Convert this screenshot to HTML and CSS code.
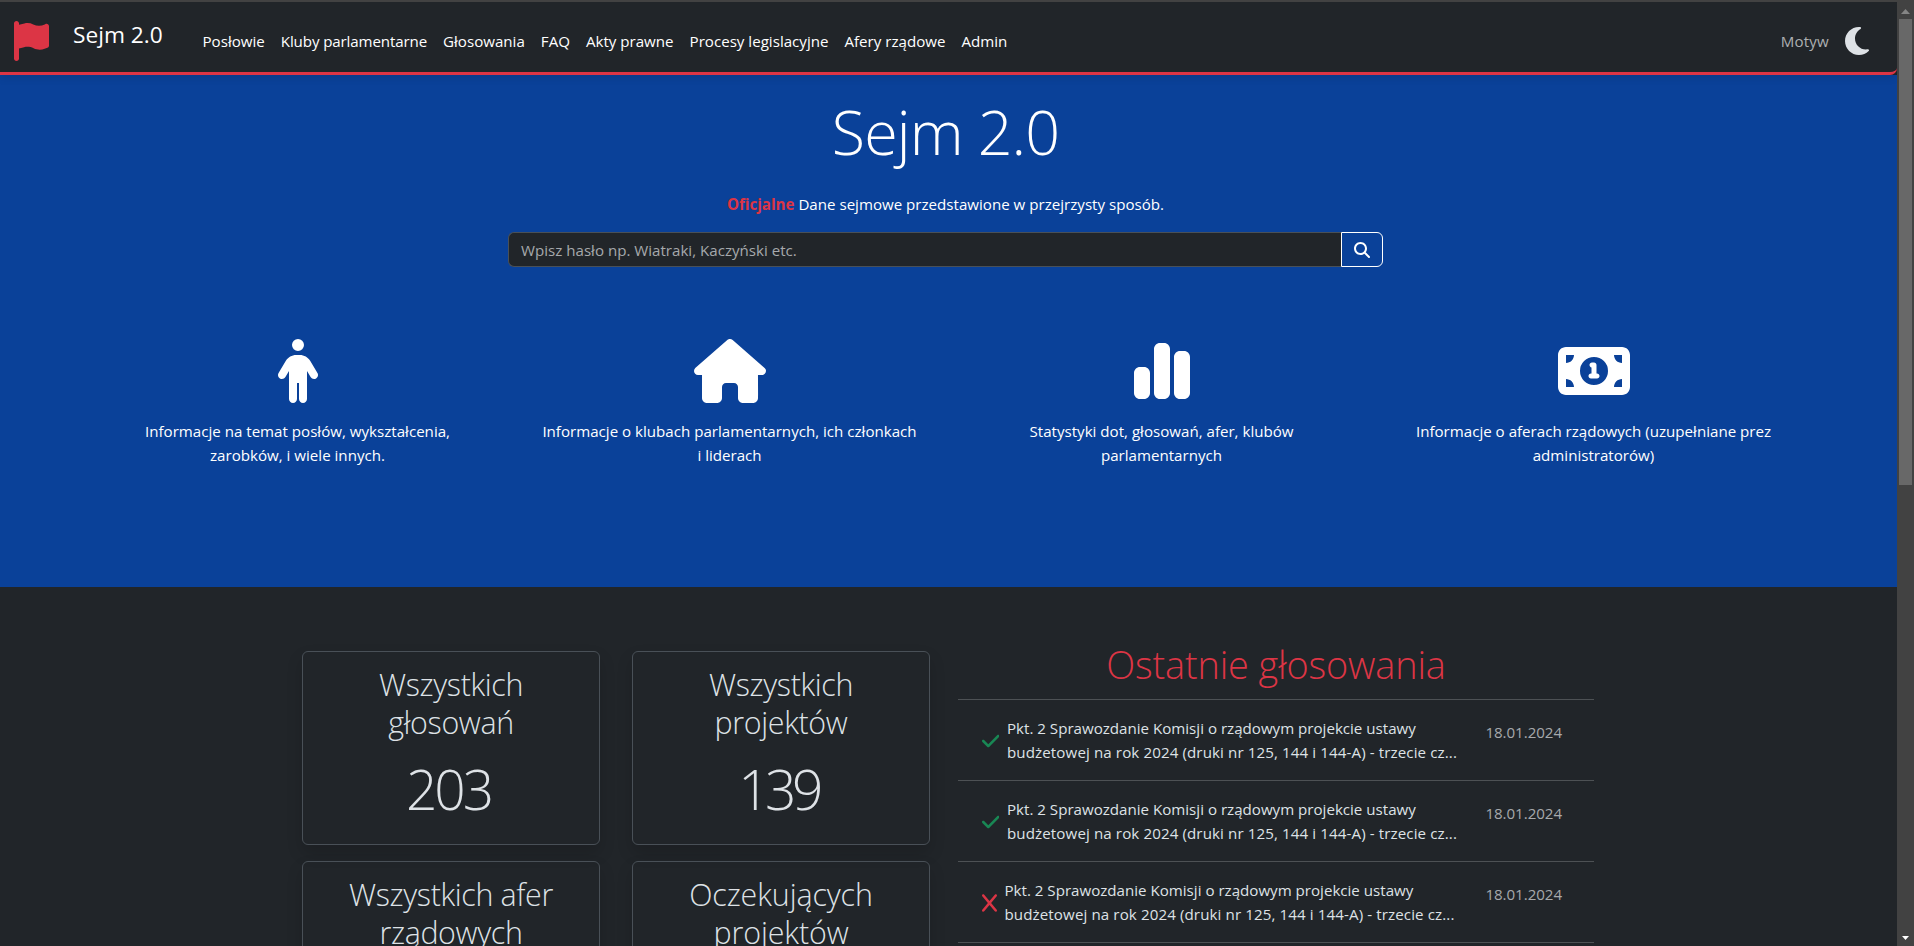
FILE: index.html
```html
<!DOCTYPE html>
<html lang="pl">
<head>
<meta charset="utf-8">
<title>Sejm 2.0</title>
<link rel="stylesheet" href="styles.css">
</head>
<body>
<div class="window">
  <div class="page">
    <div class="nav-wrap">
      <nav class="navbar">
        <svg class="flag" viewBox="0 0 448 512"><path d="M64 32C64 14.3 49.7 0 32 0S0 14.3 0 32V64 368 480c0 17.7 14.3 32 32 32s32-14.3 32-32V352l64.3-16.1c41.1-10.3 84.6-5.5 122.5 13.4c44.2 22.1 95.5 24.8 141.7 7.4l34.7-13c12.5-4.7 20.8-16.6 20.8-30V66.1c0-23-24.2-38-44.8-27.7l-9.6 4.8c-46.3 23.2-100.8 23.2-147.1 0c-35.1-17.6-75.4-22-113.5-12.5L64 48V32z"/></svg>
        <a class="brand">Sejm 2.0</a>
        <ul class="links">
          <li>Posłowie</li><li class="tight">Kluby parlamentarne</li><li>Głosowania</li><li>FAQ</li><li>Akty prawne</li><li>Procesy legislacyjne</li><li>Afery rządowe</li><li>Admin</li>
        </ul>
        <div class="theme">
          <span>Motyw</span>
          <svg class="moon" viewBox="0 0 384 512"><path d="M223.5 32C100 32 0 132.3 0 256S100 480 223.5 480c60.6 0 115.5-24.2 155.8-63.4c5-4.9 6.3-12.5 3.1-18.7s-10.1-9.7-17-8.5c-9.8 1.7-19.8 2.6-30.1 2.6c-96.9 0-175.5-78.8-175.5-176c0-65.8 36-123.1 89.3-153.3c6.1-3.5 9.2-10.5 7.7-17.3s-7.3-11.9-14.3-12.5c-6.3-.5-12.6-.8-19-.8z"/></svg>
        </div>
      </nav>
    </div>

    <header class="hero">
      <h1 class="hero-title">Sejm 2.0</h1>
      <p class="lead"><b>Oficjalne</b> Dane sejmowe przedstawione w przejrzysty sposób.</p>
      <div class="search">
        <div class="search-input">Wpisz hasło np. Wiatraki, Kaczyński etc.</div>
        <button class="search-btn" aria-label="Szukaj"><svg viewBox="0 0 512 512"><path d="M416 208c0 45.900-14.900 88.300-40 122.700L502.600 457.400c12.500 12.500 12.500 32.800 0 45.300s-32.800 12.500-45.300 0L330.700 376c-34.400 25.200-76.800 40-122.700 40C93.100 416 0 322.900 0 208S93.100 0 208 0S416 93.100 416 208zM208 352a144 144 0 1 0 0-288 144 144 0 1 0 0 288z"/></svg></button>
      </div>
      <div class="features">
        <div class="feature">
          <svg viewBox="0 0 320 512"><path d="M112 48a48 48 0 1 1 96 0 48 48 0 1 1-96 0zm40 304V480c0 17.700-14.300 32-32 32s-32-14.300-32-32V256.900L59.400 304.500c-9.100 15.100-28.800 20-43.900 10.900s-20-28.800-10.900-43.900l58.300-97c17.400-28.900 48.600-46.600 82.300-46.600h29.700c33.700 0 64.900 17.700 82.300 46.600l58.300 97c9.100 15.100 4.200 34.800-10.900 43.900s-34.800 4.200-43.900-10.900L232 256.900V480c0 17.700-14.300 32-32 32s-32-14.300-32-32V352H152z"/></svg>
          <p>Informacje na temat posłów, wykształcenia,<br>zarobków, i wiele innych.</p>
        </div>
        <div class="feature">
          <svg viewBox="0 0 576 512"><path d="M575.800 255.500c0 18-15 32.100-32 32.100h-32l.7 160.200c0 2.700-.2 5.400-.5 8.100V472c0 22.100-17.900 40-40 40H456c-1.100 0-2.200 0-3.300-.1c-1.400 .1-2.800 .1-4.200 .1H416 392c-22.100 0-40-17.900-40-40V448 384c0-17.700-14.300-32-32-32H256c-17.700 0-32 14.300-32 32v64 24c0 22.100-17.900 40-40 40H160 128.100c-1.500 0-3-.1-4.500-.2c-1.200 .1-2.400 .2-3.600 .2H104c-22.100 0-40-17.900-40-40V360c0-.9 0-1.900 .1-2.800V287.600H32c-18 0-32-14-32-32.100c0-9 3-17 10-24L266.400 8c7-7 15-8 22-8s15 2 21 7L564.800 231.500c8 7 12 15 11 24z"/></svg>
          <p>Informacje o klubach parlamentarnych, ich członkach<br>i liderach</p>
        </div>
        <div class="feature">
          <svg viewBox="0 0 448 512"><path d="M160 80c0-26.500 21.500-48 48-48h32c26.500 0 48 21.500 48 48V432c0 26.500-21.500 48-48 48H208c-26.500 0-48-21.500-48-48V80zM0 272c0-26.500 21.500-48 48-48H80c26.500 0 48 21.500 48 48V432c0 26.500-21.500 48-48 48H48c-26.500 0-48-21.500-48-48V272zM368 96h32c26.500 0 48 21.500 48 48V432c0 26.500-21.500 48-48 48H368c-26.500 0-48-21.500-48-48V144c0-26.500 21.500-48 48-48z"/></svg>
          <p>Statystyki dot, głosowań, afer, klubów<br>parlamentarnych</p>
        </div>
        <div class="feature">
          <svg viewBox="0 0 576 512"><path d="M64 64C28.700 64 0 92.700 0 128V384c0 35.300 28.700 64 64 64H512c35.300 0 64-28.700 64-64V128c0-35.300-28.700-64-64-64H64zm64 320H64V320c35.300 0 64 28.700 64 64zM64 192V128h64c0 35.300-28.700 64-64 64zM448 384c0-35.300 28.700-64 64-64v64H448zm64-192c-35.300 0-64-28.700-64-64h64v64zM176 256a112 112 0 1 1 224 0 112 112 0 1 1 -224 0zm76-48c0 9.700 6.900 17.700 16 19.600V276h-4c-11 0-20 9-20 20s9 20 20 20h24 24c11 0 20-9 20-20s-9-20-20-20h-4V208c0-11-9-20-20-20H272c-11 0-20 9-20 20z"/></svg>
          <p>Informacje o aferach rządowych (uzupełniane prez<br>administratorów)</p>
        </div>
      </div>
    </header>

    <main class="main">
      <section class="stats">
        <article class="card"><h2>Wszystkich<br>głosowań</h2><div class="num">203</div></article>
        <article class="card"><h2>Wszystkich<br>projektów</h2><div class="num num-tight">139</div></article>
        <article class="card"><h2>Wszystkich afer<br>rządowych</h2></article>
        <article class="card"><h2 class="wide">Oczekujących<br>projektów</h2></article>
      </section>
      <section class="votes">
        <h2 class="votes-title">Ostatnie głosowania</h2>
        <div class="vote">
          <svg class="check" viewBox="0 0 448 512"><path d="M438.600 105.400c12.500 12.500 12.500 32.800 0 45.300l-256 256c-12.500 12.500-32.800 12.500-45.300 0l-128-128c-12.500-12.500-12.500-32.800 0-45.300s32.800-12.500 45.300 0L160 338.700 393.400 105.400c12.500-12.500 32.800-12.500 45.300 0z"/></svg>
          <p>Pkt. 2 Sprawozdanie Komisji o rządowym projekcie ustawy<br><span class="snug">budżetowej na rok 2024 (druki nr 125, 144 i 144-A) - trzecie cz...</span></p>
          <time>18.01.2024</time>
        </div>
        <div class="vote">
          <svg class="check" viewBox="0 0 448 512"><path d="M438.600 105.400c12.500 12.500 12.500 32.800 0 45.300l-256 256c-12.500 12.500-32.800 12.500-45.300 0l-128-128c-12.500-12.500-12.500-32.800 0-45.300s32.800-12.500 45.300 0L160 338.700 393.400 105.400c12.500-12.500 32.800-12.500 45.300 0z"/></svg>
          <p>Pkt. 2 Sprawozdanie Komisji o rządowym projekcie ustawy<br><span class="snug">budżetowej na rok 2024 (druki nr 125, 144 i 144-A) - trzecie cz...</span></p>
          <time>18.01.2024</time>
        </div>
        <div class="vote">
          <svg class="cross" viewBox="0 0 384 512"><path d="M376.600 84.500c11.300-13.600 9.500-33.800-4.100-45.100s-33.800-9.500-45.100 4.100L192 206 56.600 43.500C45.300 29.900 25.100 28.100 11.500 39.400S-3.900 70.900 7.400 84.500L150.300 256 7.400 427.500c-11.300 13.600-9.500 33.800 4.100 45.100s33.800 9.500 45.100-4.100L192 306 327.400 468.500c11.300 13.600 31.500 15.400 45.100 4.100s15.400-31.500 4.100-45.100L233.700 256 376.600 84.500z"/></svg>
          <p>Pkt. 2 Sprawozdanie Komisji o rządowym projekcie ustawy<br><span class="snug">budżetowej na rok 2024 (druki nr 125, 144 i 144-A) - trzecie cz...</span></p>
          <time>18.01.2024</time>
        </div>
        <div class="vote"></div>
      </section>
    </main>
  </div>
  <div class="scrollbar">
    <svg class="arrow-up" viewBox="0 0 9 5"><path d="M0 5h9L4.500 0z"/></svg>
    <div class="thumb"></div>
    <svg class="arrow-down" viewBox="0 0 7 4"><path d="M0 0h7L3.500 4z"/></svg>
  </div>
</div>
</body>
</html>
```
FILE: styles.css
```css
* { box-sizing: border-box; margin: 0; padding: 0; }

body {
  height: 946px;
  overflow: hidden;
  background: #212529;
  color: #dee2e6;
  font: 15.12px/24px "Open Sans", "Noto Sans", sans-serif;
  white-space: nowrap;
}

svg { display: block; flex: none; }

.window {
  display: flex;
  height: 946px;
  border-top: 2px solid #424242;
}
.page { width: 1897px; overflow: hidden; }

/* Navigation */
.nav-wrap {
  position: relative;
  background: #212529;
}
.navbar {
  display: flex;
  height: 73px;
  padding: 0 28px 0 14px;
  border-bottom: 3px solid #dc3545;
  border-bottom-right-radius: 7px;
  box-shadow: 0 2px 10px rgba(0, 0, 0, .12);
}
.flag { width: 35px; height: 40px; margin-top: 19px; fill: #dc3545; }
.brand {
  width: 122px;
  margin: 13px 0 0 24px;
  color: #fff;
  font-size: 22.700px;
  line-height: 39px;
}
.links {
  display: flex;
  gap: 16px;
  margin: 27px 0 0 7.500px;
  list-style: none;
  color: #fff;
}
.tight { letter-spacing: -.12px; }
.theme {
  display: flex;
  gap: 16px;
  margin-left: auto;
  color: #adb0b2;
}
.theme span { margin-top: 27px; letter-spacing: .2px; }
.moon { width: 24px; height: 32px; margin-top: 23px; fill: #dee2e6; }

/* Hero */
.hero {
  display: flex;
  flex-direction: column;
  align-items: center;
  height: 512px;
  padding: 18px 6px 0 0;
  background: #0a4199;
  color: #fff;
}
.hero-title {
  font-size: 61px;
  font-weight: 300;
  line-height: 77px;
  letter-spacing: -.9px;
}
.lead { margin-top: 22px; }
.lead b { color: #dc3545; }
.search {
  display: flex;
  width: 875px;
  height: 35px;
  margin-top: 16px;
}
.search-input {
  flex: 1;
  padding: 5px 12px;
  border: 1px solid #495057;
  border-right: 0;
  border-radius: 6px 0 0 6px;
  background: #212529;
  color: #a6a9ac;
}
.search-btn {
  display: flex;
  align-items: center;
  justify-content: center;
  width: 42px;
  border: 1px solid #fff;
  border-radius: 0 6px 6px 0;
  background: transparent;
}
.search-btn svg { width: 16px; height: 16px; fill: #fff; }
.features {
  display: grid;
  grid-template-columns: repeat(4, 432px);
  margin-top: 72px;
}
.feature {
  display: flex;
  flex-direction: column;
  align-items: center;
  gap: 16px;
  text-align: center;
}
.feature svg { height: 64px; fill: #fff; }

/* Statistics and latest votes */
.main {
  display: flex;
  gap: 28px;
  padding: 54px 0 0 302px;
}
.stats {
  display: grid;
  grid-template-columns: 298px 298px;
  gap: 16px 32px;
  padding-top: 10px;
}
.card {
  height: 194px;
  padding-top: 14px;
  border: 1px solid #495057;
  border-radius: 6px;
  box-shadow: 0 8px 16px rgba(0, 0, 0, .15);
  text-align: center;
}
.card h2 {
  font-size: 30.400px;
  font-weight: 300;
  line-height: 38px;
  letter-spacing: -.35px;
}
.card h2.wide { letter-spacing: -.1px; }
.num {
  margin-top: 13px;
  padding-right: 5px;
  font-size: 55px;
  font-weight: 300;
  line-height: 67px;
  letter-spacing: -3px;
}
.num-tight { letter-spacing: -4.500px; }
.votes { width: 636px; }
.votes-title {
  height: 58px;
  color: #dc3545;
  font-size: 37.900px;
  font-weight: 300;
  line-height: 47px;
  letter-spacing: -.15px;
  text-align: center;
}
.vote {
  display: flex;
  height: 81px;
  padding: 16px 32px 0 23.500px;
  border-top: 1px solid #4d5154;
}
.vote p { margin-left: 8px; }
.snug { letter-spacing: .11px; }
.check { width: 17.500px; height: 20px; margin-top: 15px; fill: #198754; }
.cross { width: 15px; height: 20px; margin-top: 15px; fill: #dc3545; }
.vote time { margin: 4px 0 0 auto; color: #a6a9ac; letter-spacing: -.05px; }

/* Scrollbar */
.scrollbar {
  display: flex;
  flex-direction: column;
  align-items: center;
  width: 17px;
  padding-top: 7px;
  background: #424242;
}
.arrow-up { width: 9px; height: 5px; fill: #858585; }
.thumb { width: 13px; height: 466px; margin-top: 5px; background: #686868; }
.arrow-down { width: 7px; height: 4px; margin: auto 0 6px; fill: #fff; }
```
